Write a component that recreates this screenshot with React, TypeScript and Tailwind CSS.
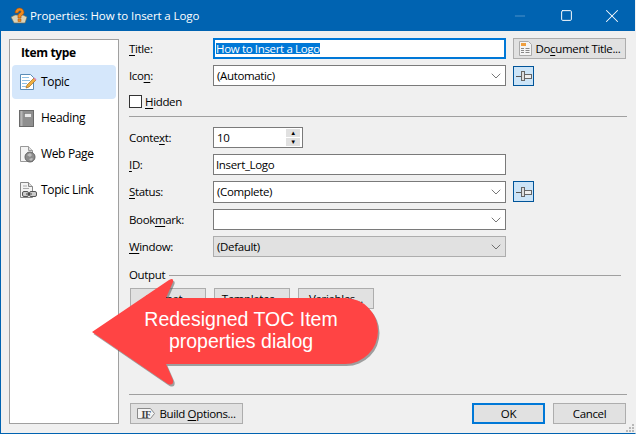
import { ReactNode } from "react";
import { ChevronDown, Minus, Square, X } from "lucide-react";

// shared label with accelerator underline
function Label({ pre = "", u, post = "" }: { pre?: string; u: string; post?: string }) {
  return (
    <span className="w-[84px] shrink-0 text-[11.5px] leading-none text-[#000]">
      {pre}
      <span className="underline underline-offset-2">{u}</span>
      {post}
    </span>
  );
}

function PinIcon() {
  return (
    <svg width="16" height="10" viewBox="0 0 16 10">
      <path d="M0 5.500h5" stroke="#555" fill="none" />
      <rect x="5.500" y="0.500" width="3" height="9" fill="#ddd" stroke="#666" />
      <rect x="8.500" y="3.500" width="7" height="4" fill="#eee" stroke="#666" />
    </svg>
  );
}

function PinButton({ className = "" }: { className?: string }) {
  return (
    <div className={"flex w-[21px] items-center justify-center border border-[#005499] bg-[#cce4f7] " + className}>
      <PinIcon />
    </div>
  );
}

function Select({ value, disabled }: { value?: string; disabled?: boolean }) {
  return (
    <div
      className={
        disabled
          ? "flex h-full w-[293px] items-center justify-between border border-[#adadad] bg-[#e1e1e1] pl-[3px] pr-[1px] text-[11.5px]"
          : "flex h-full w-[293px] items-center justify-between border border-[#7a7a7a] bg-white pl-[3px] pr-[1px] text-[11.5px]"
      }
    >
      <span>{value}</span>
      <ChevronDown size={16} strokeWidth={1.1} color="#444" />
    </div>
  );
}

function Btn({ children, className = "", focused }: { children: ReactNode; className?: string; focused?: boolean }) {
  return (
    <div
      className={
        (focused ? "border-2 border-[#0078d7] " : "border border-[#adadad] ") +
        "flex h-[21px] items-center justify-center whitespace-nowrap bg-[#e1e1e1] text-[11.5px] " +
        className
      }
    >
      {children}
    </div>
  );
}

function TopicIcon() {
  return (
    <svg width="18" height="18" viewBox="0 0 18 18">
      <path d="M1.500 1.500h10l3 3v12h-13z" fill="#fff" stroke="#5b8db8" />
      <path d="M3 4.500h7M3 7.500h8M3 10.500h5M3 13.500h4" stroke="#8fc0e4" />
      <path d="M7 15l1-3 7-7 2 2-7 7z" fill="#f0b040" stroke="#a06a20" strokeWidth="0.7" />
      <path d="M14.500 5.500l1-1 2 2-1 1z" fill="#e080b0" />
    </svg>
  );
}

function HeadingIcon() {
  return (
    <svg width="15" height="17" viewBox="0 0 15 17">
      <rect x="0.500" y="0.500" width="14" height="16" fill="#8f8f8f" stroke="#6a6a6a" />
      <rect x="1.500" y="1" width="2" height="15" fill="#b5b5b5" />
      <rect x="5.500" y="3.500" width="7" height="4" fill="#e8e8e8" stroke="#777" strokeWidth="0.6" />
    </svg>
  );
}

function WebIcon() {
  return (
    <svg width="18" height="17" viewBox="0 0 18 17">
      <path d="M1.500 0.500h8l4 4v11h-12z" fill="#f4f4f4" stroke="#999" />
      <path d="M9.500 0.500v4h4" fill="#ddd" stroke="#999" />
      <circle cx="11" cy="11" r="5" fill="#8c8c8c" stroke="#666" />
      <path d="M8 9l3-2 2 2-2 2zM10 13l3-1 1 1-2 2z" fill="#bdbdbd" />
    </svg>
  );
}

function LinkIcon() {
  return (
    <svg width="18" height="17" viewBox="0 0 18 17">
      <path d="M1.500 0.500h8l4 4v11h-12z" fill="#f4f4f4" stroke="#888" />
      <path d="M9.500 0.500v4h4" fill="#ddd" stroke="#888" />
      <path d="M4 4h4M4 6.500h6" stroke="#aaa" />
      <rect x="3.500" y="9.500" width="6" height="5" rx="1.500" fill="#ccc" stroke="#555" />
      <rect x="10.500" y="9.500" width="7" height="5" rx="1.500" fill="#ccc" stroke="#555" />
      <path d="M7 12h6" stroke="#444" />
    </svg>
  );
}

function DocIcon() {
  return (
    <svg width="13" height="15" viewBox="0 0 13 15">
      <path d="M0.500 0.500h9l3 3v11h-12z" fill="#f5f5f5" stroke="#aaa" />
      <rect x="2" y="2" width="5" height="3" fill="#f0a040" />
      <path d="M2 7.500h3M6.500 7.500h4M2 9.500h3M6.500 9.500h4M2 11.500h3M6.500 11.500h4" stroke="#888" />
    </svg>
  );
}

function AppIcon() {
  return (
    <svg width="18" height="18" viewBox="0 0 18 18">
      <path d="M1 10l4-2h8l4 2-2 6H4z" fill="#d8d2b8" stroke="#6b6a50" strokeWidth="0.6" />
      <path d="M5 6c0-3 2-5 4.500-5S14 3 14 5.500c0 2-2 2.500-3 3.500v2H8V8c0-1.500 3-2 3-3.500 0-1-2.500-1-3 1.500z" fill="#f08a1c" stroke="#a04a08" strokeWidth="0.6" />
      <rect x="8" y="12" width="3" height="2.500" fill="#f08a1c" stroke="#a04a08" strokeWidth="0.5" />
    </svg>
  );
}

function IfIcon() {
  return (
    <svg width="18" height="11" viewBox="0 0 18 11">
      <path d="M0.500 0.500h13l4 5-4 5h-13z" fill="#f4f4f4" stroke="#8a8a8a" />
    </svg>
  );
}

function NavItem({ icon, label, active }: { icon: ReactNode; label: string; active?: boolean }) {
  return (
    <div className={active ? "mb-[2px] flex h-[34px] items-center rounded-[4px] bg-[#d5e7fb] pl-[7px]" : "mb-[2px] flex h-[34px] items-center pl-[7px]"}>
      <div className="flex w-[22px] justify-start">{icon}</div>
      <span className="text-[12px] text-black">{label}</span>
    </div>
  );
}

export default function App() {
  return (
    <div className="relative flex h-[434px] w-[636px] flex-col overflow-hidden border-b border-l border-r border-[#0063b1] border-r-[#f0f0f0] bg-[#f0f0f0] tracking-[-0.35px] text-black [font-family:'Open_Sans','Noto_Sans',sans-serif]">
      {/* title bar */}
      <div className="flex h-[31px] shrink-0 items-center bg-[#0063b1] pl-[9px] text-white">
        <AppIcon />
        <span className="ml-[2px] text-[11.5px] tracking-[-0.1px]">Properties: How to Insert a Logo</span>
        <div className="ml-auto flex items-center">
          <div className="flex w-[46px] justify-center"><Minus size={16} strokeWidth={1.5} color="#4d92c8" /></div>
          <div className="flex w-[46px] justify-center"><Square size={13} strokeWidth={1.8} color="#fff" /></div>
          <div className="flex w-[46px] justify-center"><X size={22} strokeWidth={1.1} color="#fff" /></div>
        </div>
      </div>

      {/* client area */}
      <div className="flex flex-1 pb-[9px] pl-[8px] pr-[8px] pt-[7px]">
        <div className="mt-px w-[110px] shrink-0 border border-[#a0a0a0] bg-white px-[2px]">
          <div className="flex h-[25px] items-center pl-[9px] text-[12px] font-bold">Item type</div>
          <NavItem active icon={<TopicIcon />} label="Topic" />
          <NavItem icon={<HeadingIcon />} label="Heading" />
          <NavItem icon={<WebIcon />} label="Web Page" />
          <NavItem icon={<LinkIcon />} label="Topic Link" />
        </div>

        <div className="ml-[10px] flex flex-1 flex-col">
          <div className="flex h-[21px] items-center">
            <Label u="T" post="itle:" />
            <div className="flex h-full w-[293px] items-center border-2 border-[#0078d7] bg-white pl-[1px] text-[11.5px] leading-none">
              <span className="bg-[#0078d7] text-white">How to Insert a Logo</span>
            </div>
            <Btn className="ml-[7px] w-[113px] gap-[4px]">
              <DocIcon />
              <span>Do<span className="underline underline-offset-2">c</span>ument Title...</span>
            </Btn>
          </div>
          <div className="mt-[6px] flex h-[21px] items-center">
            <Label pre="Ico" u="n" post=":" />
            <Select value="(Automatic)" />
            <PinButton className="ml-[7px] mt-px h-[20px]" />
          </div>
          <div className="mt-[9px] flex h-[13px] items-center">
            <div className="h-[13px] w-[13px] border border-[#333] bg-white" />
            <span className="ml-[3px] text-[11.5px]"><span className="underline underline-offset-2">H</span>idden</span>
          </div>
          <div className="mt-[8px] h-px w-[498px] bg-[#a0a0a0]" />

          <div className="mt-[10px] flex h-[21px] items-center">
            <Label pre="Conte" u="x" post="t:" />
            <div className="flex h-full w-[90px] items-center justify-between border border-[#7a7a7a] bg-white pl-[3px] pr-[2px] text-[11.5px]">
              <span>10</span>
              <div className="flex flex-col gap-px">
                <div className="flex h-[8px] w-[14px] items-center justify-center bg-[#e1e1e1] text-[6px] leading-none">▲</div>
                <div className="flex h-[8px] w-[14px] items-center justify-center bg-[#e1e1e1] text-[6px] leading-none">▼</div>
              </div>
            </div>
          </div>
          <div className="mt-[6px] flex h-[21px] items-center">
            <Label u="I" post="D:" />
            <div className="flex h-full w-[293px] items-center border border-[#7a7a7a] bg-white pl-[2px] text-[11.5px]">Insert_Logo</div>
          </div>
          <div className="mt-[6px] flex h-[22px] items-center">
            <Label u="S" post="tatus:" />
            <Select value="(Complete)" />
            <PinButton className="mb-px ml-[7px] h-[21px]" />
          </div>
          <div className="mt-[6px] flex h-[21px] items-center">
            <Label pre="Book" u="m" post="ark:" />
            <Select />
          </div>
          <div className="mt-[6px] flex h-[21px] items-center">
            <Label u="W" post="indow:" />
            <Select value="(Default)" disabled />
          </div>

          <div className="mt-[10px] flex h-[16px] items-center">
            <span className="text-[11.5px]">Output</span>
            <div className="ml-[4px] mr-[6px] h-px flex-1 bg-[#a0a0a0]" />
          </div>
          <div className="mt-[5px] flex gap-[8px] pl-px">
            <Btn className="w-[76px]">Format...</Btn>
            <Btn className="w-[76px]">Templates...</Btn>
            <Btn className="w-[76px]">Variables...</Btn>
          </div>

          <div className="mt-auto h-px w-[498px] bg-[#a0a0a0]" />
          <div className="mt-[8px] flex pl-px">
            <Btn className="w-[113px] gap-[4px]">
              <span className="relative flex items-center justify-center">
                <IfIcon />
                <span className="absolute left-[4px] top-[-1px] text-[10px] font-bold text-[#444] [font-family:'Liberation_Serif',serif]">IF</span>
              </span>
              <span>Build <span className="underline underline-offset-2">O</span>ptions...</span>
            </Btn>
            <Btn focused className="ml-auto w-[73px]">OK</Btn>
            <Btn className="ml-[8px] mr-[1px] w-[73px]">Cancel</Btn>
          </div>
        </div>
      </div>

      {/* resize grip */}
      <svg width="10" height="10" viewBox="0 0 10 10" className="absolute bottom-0 right-0">
        <path d="M7 1h2v2H7zM4 4h2v2H4zM7 4h2v2H7zM1 7h2v2H1zM4 7h2v2H4zM7 7h2v2H7z" fill="#b8b8b8" />
      </svg>

      {/* callout arrow over the dialog */}
      <div className="absolute left-[89px] top-[276px] h-[112px] w-[292px]">
        <svg width="292" height="112" viewBox="0 0 292 112" className="absolute left-0 top-0">
          <path
            d="M2 56 L79 4 Q84 1 83 6 L76 22 H255 A33 33 0 0 1 255 88 H76 L83 104 Q84 110 78 108 Z"
            fill="#3a3a3a"
            opacity="0.45"
            transform="translate(1.500 2)"
          />
          <path
            d="M2 56 L79 4 Q84 1 83 6 L76 22 H255 A33 33 0 0 1 255 88 H76 L83 104 Q84 110 78 108 Z"
            fill="#ff4444"
          />
        </svg>
        <div className="absolute left-[44px] top-[32px] w-[214px] text-center text-[19.5px] leading-[22px] tracking-normal text-white [font-family:'Liberation_Sans',sans-serif]">
          Redesigned TOC Item
          <br />
          properties dialog
        </div>
      </div>
    </div>
  );
}
